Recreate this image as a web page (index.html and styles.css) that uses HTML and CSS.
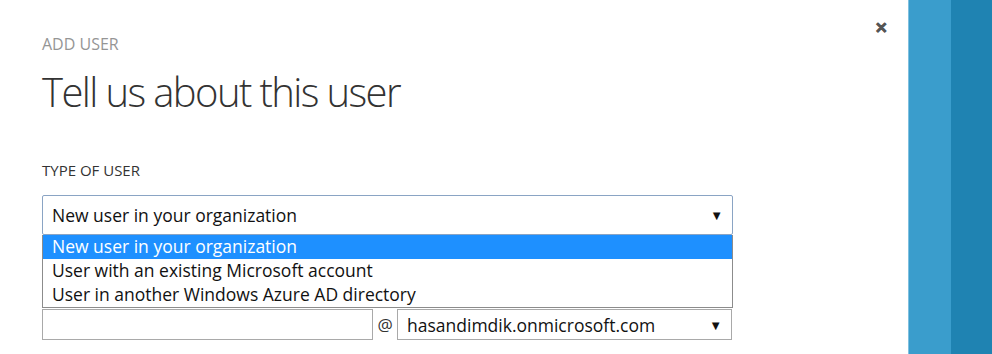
FILE: index.html
```html
<!DOCTYPE html>
<html lang="en">
<head>
    <meta charset="UTF-8">
    <title>Add user</title>
    <link rel="stylesheet" href="styles.css">
</head>
<body>
<div class="page">
    <div class="panel">
        <span class="close">&#x2715;</span>
        <div class="kicker">ADD USER</div>
        <h1 class="title">Tell us about this user</h1>

        <div class="label">TYPE OF USER</div>
        <div class="dropdown">
            <div class="select focused">
                <span>New user in your organization</span>
                <span class="arrow">&#9660;</span>
            </div>
            <ul class="options">
                <li class="active">New user in your organization</li>
                <li>User with an existing Microsoft account</li>
                <li>User in another Windows Azure AD directory</li>
            </ul>
        </div>

        <div class="spacer"></div>

        <div class="name-row">
            <div class="input"></div>
            <span class="at">@</span>
            <div class="select domain">
                <span>hasandimdik.onmicrosoft.com</span>
                <span class="arrow">&#9660;</span>
            </div>
        </div>
    </div>
    <div class="strip light"></div>
    <div class="strip dark"></div>
</div>
</body>
</html>
```

FILE: styles.css
```css
body {
    margin: 0;
    font-family: "Open Sans", "Noto Sans", sans-serif;
    background: #ffffff;
    color: #222;
}

.page {
    display: flex;
    height: 354px;
    overflow: hidden;
}

.panel {
    position: relative;
    width: 908px;
    padding: 34px 0 0 42px;
    box-sizing: border-box;
}

.close {
    position: absolute;
    top: 17px;
    left: 875px;
    font-size: 15px;
    font-weight: bold;
    color: #555;
    -webkit-text-stroke: 0.8px #555;
}

.kicker {
    font-size: 16px;
    color: #959595;
    line-height: 20px;
}

.title {
    margin: 13px 0 0 0;
    font-size: 40px;
    font-weight: 300;
    letter-spacing: -1.6px;
    color: #333;
    line-height: 50px;
}

.label {
    margin-top: 44px;
    font-size: 15px;
    color: #333;
    line-height: 18px;
}

.dropdown {
    position: relative;
    margin-top: 16px;
    width: 691px;
}

.select {
    display: flex;
    align-items: center;
    justify-content: space-between;
    border: 1px solid #a9a9a9;
    padding: 0 9px 0 9px;
    font-size: 17.5px;
    color: #111;
    box-sizing: border-box;
}

.select.focused {
    height: 40px;
    border-color: #8aa4c4;
    border-radius: 2px;
}

.arrow {
    font-size: 13px;
    color: #111;
}

.options {
    position: absolute;
    top: 40px;
    left: 0;
    right: 0;
    margin: 0;
    padding: 0;
    list-style: none;
    background: #fff;
    border: 1px solid #8c8c8c;
    border-top: none;
    z-index: 2;
}

.options li {
    height: 24px;
    line-height: 22px;
    padding-left: 9px;
    font-size: 17.5px;
    color: #111;
}

.options li.active {
    background: #1e90ff;
    color: #fff;
}

.spacer {
    height: 74px;
}

.name-row {
    display: flex;
    align-items: center;
    width: 691px;
}

.input {
    width: 331px;
    height: 31px;
    border: 1px solid #a9a9a9;
    box-sizing: border-box;
}

.at {
    width: 24px;
    text-align: center;
    font-size: 17px;
    color: #333;
}

.select.domain {
    width: 335px;
    height: 31px;
}

.strip {
    height: 354px;
}

.strip.light {
    width: 42px;
    background: #3a9dcc;
    border-left: 1px solid #7fc0e0;
}

.strip.dark {
    flex: 1;
    background: #1f83b2;
}
```
